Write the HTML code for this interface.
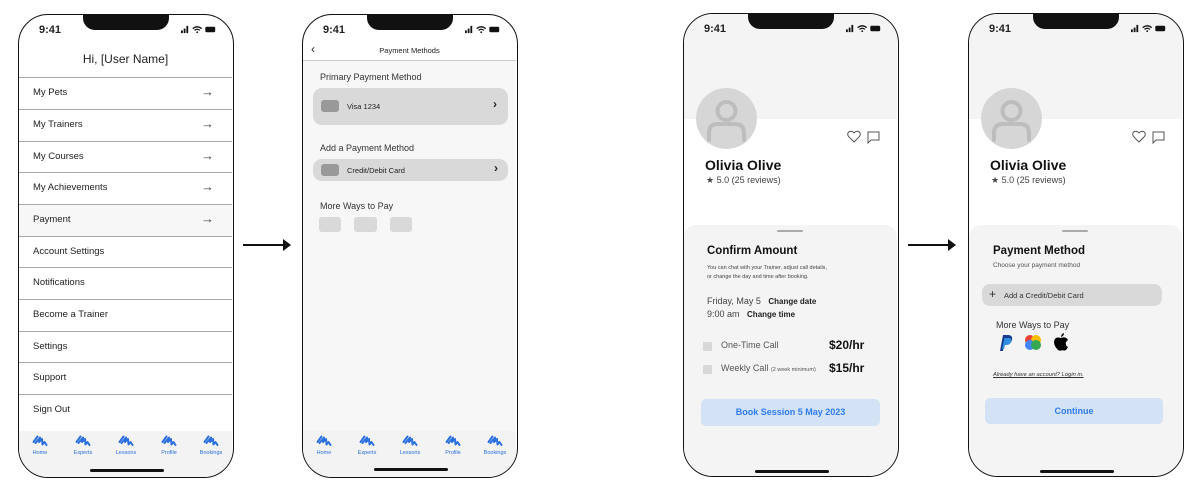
<!DOCTYPE html>
<html><head><meta charset="utf-8"><style>
*{margin:0;padding:0;box-sizing:border-box}
body{width:1200px;height:494px;background:#fff;position:relative;overflow:hidden;font-family:"Liberation Sans",sans-serif;color:#222}
.ph{position:absolute;width:216px;height:464px;border:1.5px solid #111;border-radius:30px;overflow:hidden;background:#fff}
.notch{position:absolute;left:64px;top:-2px;width:86px;height:17px;background:#111;border-radius:0 0 12px 12px;z-index:5}
.time{position:absolute;left:20px;top:9px;font-size:11px;font-weight:bold;z-index:5}
.st{position:absolute;right:16px;top:10px;z-index:5;display:flex;gap:4px;align-items:center}
.a{position:absolute;white-space:nowrap}
.hi{position:absolute;left:71px;bottom:5px;width:74px;height:3px;background:#111;border-radius:2px;z-index:5}
.row{position:absolute;left:0;width:213px;height:32px;border-top:1px solid #aaa;font-size:9.5px;padding:9px 0 0 14px}
.row i{position:absolute;right:18px;top:6px;font-style:normal;font-size:13px;color:#444}
.tab{position:absolute;left:0;top:416px;width:213px;height:46px;background:#f3f3f3}
.ti{position:absolute;top:4px;width:40px;text-align:center;font-size:5.5px;color:#2b6fe0}
.ti svg{display:block;margin:0 auto 3px}
.sheet{position:absolute;left:0;top:211px;width:213px;height:260px;background:#f4f4f4;border-radius:12px 12px 0 0}
.handle{position:absolute;left:93px;top:5px;width:26px;height:2px;background:#aaa;border-radius:1px}
</style></head><body>

<svg width="0" height="0" style="position:absolute"><defs>
<symbol id="sq" viewBox="0 0 16 12"><path d="M1.5 7 L5.5 1.5 M3.5 8 L8 2.5 L7 7 L10 4 L10.5 9.5 L12.5 7 L14.5 10" fill="none" stroke="#2b6fe0" stroke-width="2" stroke-linecap="round" stroke-linejoin="round"/></symbol>
<symbol id="stat" viewBox="0 0 40 10"><rect x="0" y="6" width="2" height="3" fill="#111"/><rect x="3" y="4" width="2" height="5" fill="#111"/><rect x="6" y="1" width="2" height="8" fill="#111"/><path d="M13 4 Q18 0 23 4 M15 6 Q18 3.5 21 6" stroke="#111" stroke-width="1.4" fill="none"/><circle cx="18" cy="8" r="1" fill="#111"/><rect x="27" y="2" width="11" height="6" rx="1.5" fill="#111"/></symbol>
</defs></svg>

<!-- Phone 1 -->
<div class="ph" style="left:18px;top:14px">
<div class="notch"></div><div class="time">9:41</div><div class="st"><svg width="36" height="9"><use href="#stat"/></svg></div>
<div class="a" style="left:0;width:213px;text-align:center;top:37px;font-size:12px">Hi, [User Name]</div>
<div class="row" style="top:62px">My Pets<i>→</i></div>
<div class="row" style="top:94px">My Trainers<i>→</i></div>
<div class="row" style="top:126px">My Courses<i>→</i></div>
<div class="row" style="top:157px">My Achievements<i>→</i></div>
<div class="row" style="top:189px;background:#f7f7f7">Payment<i>→</i></div>
<div class="row" style="top:221px">Account Settings</div>
<div class="row" style="top:252px">Notifications</div>
<div class="row" style="top:284px">Become a Trainer</div>
<div class="row" style="top:316px">Settings</div>
<div class="row" style="top:347px">Support</div>
<div class="row" style="top:379px">Sign Out</div>
<div class="tab">
<div class="ti" style="left:1px"><svg width="16" height="12"><use href="#sq"/></svg>Home</div>
<div class="ti" style="left:44px"><svg width="16" height="12"><use href="#sq"/></svg>Experts</div>
<div class="ti" style="left:87px"><svg width="16" height="12"><use href="#sq"/></svg>Lessons</div>
<div class="ti" style="left:130px"><svg width="16" height="12"><use href="#sq"/></svg>Profile</div>
<div class="ti" style="left:172px"><svg width="16" height="12"><use href="#sq"/></svg>Bookings</div>
</div>
<div class="hi"></div>
</div>

<svg class="a" style="left:243px;top:238px" width="50" height="14"><line x1="0" y1="7" x2="45" y2="7" stroke="#111" stroke-width="2"/><path d="M40 1 L48 7 L40 13 Z" fill="#111"/></svg>

<!-- Phone 2 -->
<div class="ph" style="left:302px;top:14px">
<div class="notch"></div><div class="time">9:41</div><div class="st"><svg width="36" height="9"><use href="#stat"/></svg></div>
<div class="a" style="left:8px;top:27px;font-size:12px">‹</div>
<div class="a" style="left:0;width:213px;text-align:center;top:31px;font-size:7.5px">Payment Methods</div>
<div class="a" style="left:0;top:45px;width:213px;height:371px;background:#f7f7f7;border-top:1px solid #ccc"></div>
<div class="a" style="left:17px;top:57px;font-size:9px;color:#333">Primary Payment Method</div>
<div class="a" style="left:10px;top:73px;width:195px;height:37px;background:#d9d9d9;border-radius:9px"></div>
<div class="a" style="left:18px;top:85px;width:18px;height:12px;background:#999;border-radius:3px"></div>
<div class="a" style="left:44px;top:87px;font-size:7.5px">Visa 1234</div>
<div class="a" style="left:190px;top:82px;font-size:12px;font-weight:bold">›</div>
<div class="a" style="left:17px;top:128px;font-size:9px;color:#333">Add a Payment Method</div>
<div class="a" style="left:10px;top:144px;width:195px;height:22px;background:#d9d9d9;border-radius:9px"></div>
<div class="a" style="left:18px;top:149px;width:18px;height:12px;background:#999;border-radius:3px"></div>
<div class="a" style="left:44px;top:151px;font-size:7.5px">Credit/Debit Card</div>
<div class="a" style="left:191px;top:146px;font-size:12px;font-weight:bold">›</div>
<div class="a" style="left:17px;top:186px;font-size:9px;color:#333">More Ways to Pay</div>
<div class="a" style="left:16px;top:202px;width:22px;height:15px;background:#d9d9d9;border-radius:3px"></div>
<div class="a" style="left:51px;top:202px;width:23px;height:15px;background:#d9d9d9;border-radius:3px"></div>
<div class="a" style="left:87px;top:202px;width:22px;height:15px;background:#d9d9d9;border-radius:3px"></div>
<div class="tab">
<div class="ti" style="left:1px"><svg width="16" height="12"><use href="#sq"/></svg>Home</div>
<div class="ti" style="left:44px"><svg width="16" height="12"><use href="#sq"/></svg>Experts</div>
<div class="ti" style="left:87px"><svg width="16" height="12"><use href="#sq"/></svg>Lessons</div>
<div class="ti" style="left:130px"><svg width="16" height="12"><use href="#sq"/></svg>Profile</div>
<div class="ti" style="left:172px"><svg width="16" height="12"><use href="#sq"/></svg>Bookings</div>
</div>
<div class="hi" style="top:453px;bottom:auto"></div>
</div>

<!-- Phone 3 -->
<div class="ph" style="left:683px;top:13px">
<div class="a" style="left:0;top:0;width:213px;height:105px;background:#f4f4f4"></div>
<div class="notch"></div><div class="time">9:41</div><div class="st"><svg width="36" height="9"><use href="#stat"/></svg></div>
<div class="a" style="left:12px;top:74px;width:61px;height:61px;border-radius:50%;background:#d6d6d6;overflow:hidden"><svg width="61" height="61"><circle cx="30.5" cy="23" r="9" fill="none" stroke="#bdbdbd" stroke-width="4"/><path d="M13 52 V45 Q13 36 22 36 H39 Q48 36 48 45 V52" fill="none" stroke="#bdbdbd" stroke-width="4" stroke-linecap="round"/></svg></div>
<svg class="a" style="left:163px;top:116px" width="14" height="13"><path d="M7 12 L1.5 6.5 Q-0.5 3 2.5 1.5 Q5 0.5 7 3 Q9 0.5 11.5 1.5 Q14.5 3 12.5 6.5 Z" fill="none" stroke="#555" stroke-width="1"/></svg>
<svg class="a" style="left:183px;top:117px" width="13" height="13"><path d="M1 1 H12 V9 H4 L1 12 Z" fill="none" stroke="#555" stroke-width="1"/></svg>
<div class="a" style="left:21px;top:143px;font-size:14px;font-weight:bold;color:#111">Olivia Olive</div>
<div class="a" style="left:22px;top:161px;font-size:9px;color:#444">★ 5.0 (25 reviews)</div>
<div class="sheet"><div class="handle"></div>
<div class="a" style="left:23px;top:20px;font-size:11.5px;font-weight:bold;color:#111">Confirm Amount</div>
<div class="a" style="left:23px;top:39px;font-size:5.5px;color:#444;line-height:9px">You can chat with your Trainer, adjust call details,<br>or change the day and time after booking.</div>
<div class="a" style="left:23px;top:71px;font-size:9px;color:#444">Friday, May 5 &nbsp;&nbsp;<b style="font-size:8px;color:#222">Change date</b></div>
<div class="a" style="left:23px;top:84px;font-size:9px;color:#444">9:00 am &nbsp;&nbsp;<b style="font-size:8px;color:#222">Change time</b></div>
<div class="a" style="left:19px;top:117px;width:9px;height:9px;background:#d8d8d8"></div>
<div class="a" style="left:37px;top:115px;font-size:9px;color:#555">One-Time Call</div>
<div class="a" style="left:145px;top:113px;font-size:12px;font-weight:bold;color:#111">$20/hr</div>
<div class="a" style="left:19px;top:140px;width:9px;height:9px;background:#d8d8d8"></div>
<div class="a" style="left:37px;top:138px;font-size:9px;color:#555">Weekly Call <span style="font-size:5.5px">(2 week minimum)</span></div>
<div class="a" style="left:145px;top:136px;font-size:12px;font-weight:bold;color:#111">$15/hr</div>
<div class="a" style="left:17px;top:174px;width:179px;height:27px;background:#d3e2f5;border-radius:5px;text-align:center;font-size:9px;font-weight:bold;color:#2f7bf0;padding-top:8px">Book Session 5 May 2023</div>
</div>
<div class="hi" style="bottom:3px"></div>
</div>

<svg class="a" style="left:908px;top:238px" width="50" height="14"><line x1="0" y1="7" x2="45" y2="7" stroke="#111" stroke-width="2"/><path d="M40 1 L48 7 L40 13 Z" fill="#111"/></svg>

<!-- Phone 4 -->
<div class="ph" style="left:968px;top:13px">
<div class="a" style="left:0;top:0;width:213px;height:105px;background:#f4f4f4"></div>
<div class="notch"></div><div class="time">9:41</div><div class="st"><svg width="36" height="9"><use href="#stat"/></svg></div>
<div class="a" style="left:12px;top:74px;width:61px;height:61px;border-radius:50%;background:#d6d6d6;overflow:hidden"><svg width="61" height="61"><circle cx="30.5" cy="23" r="9" fill="none" stroke="#bdbdbd" stroke-width="4"/><path d="M13 52 V45 Q13 36 22 36 H39 Q48 36 48 45 V52" fill="none" stroke="#bdbdbd" stroke-width="4" stroke-linecap="round"/></svg></div>
<svg class="a" style="left:163px;top:116px" width="14" height="13"><path d="M7 12 L1.5 6.5 Q-0.5 3 2.5 1.5 Q5 0.5 7 3 Q9 0.5 11.5 1.5 Q14.5 3 12.5 6.5 Z" fill="none" stroke="#555" stroke-width="1"/></svg>
<svg class="a" style="left:183px;top:117px" width="13" height="13"><path d="M1 1 H12 V9 H4 L1 12 Z" fill="none" stroke="#555" stroke-width="1"/></svg>
<div class="a" style="left:21px;top:143px;font-size:14px;font-weight:bold;color:#111">Olivia Olive</div>
<div class="a" style="left:22px;top:161px;font-size:9px;color:#444">★ 5.0 (25 reviews)</div>
<div class="sheet"><div class="handle"></div>
<div class="a" style="left:24px;top:20px;font-size:11.5px;font-weight:bold;color:#111">Payment Method</div>
<div class="a" style="left:24px;top:37px;font-size:6.5px;color:#555">Choose your payment method</div>
<div class="a" style="left:13px;top:59px;width:180px;height:22px;background:#d9d9d9;border-radius:8px"></div>
<div class="a" style="left:20px;top:62px;font-size:12px;color:#333">+</div>
<div class="a" style="left:35px;top:66px;font-size:7.5px;color:#333">Add a Credit/Debit Card</div>
<div class="a" style="left:27px;top:95px;font-size:9px;color:#333">More Ways to Pay</div>
<svg class="a" style="left:28px;top:109px" width="16" height="18"><path d="M3 17 L6 1 H11 Q16 1 15 6 Q14 10 9 10 H7 L6 17 Z" fill="#1a3a8c"/><path d="M5 15 L7.5 4 H12 Q15 4 14 8 Q13 11 9 11 H8 L7 15 Z" fill="#2f8fe0"/></svg>
<svg class="a" style="left:55px;top:109px" width="18" height="17"><circle cx="6" cy="6" r="5" fill="#ea4335"/><circle cx="12" cy="6" r="5" fill="#fbbc04"/><circle cx="6" cy="11" r="5" fill="#4285f4"/><circle cx="12" cy="11" r="5" fill="#34a853"/></svg>
<svg class="a" style="left:84px;top:108px" width="16" height="18"><path d="M8 5 Q10 4 12 4.5 Q14 5 15 7 Q12 9 13 12 Q14 14 15 14 Q13 18 11 17.5 Q9.5 17 8 17.5 Q6.5 18 5 17 Q1 13 1 9 Q1.5 4.5 5 4.5 Q6.5 4.5 8 5 Z M8 4 Q8 1 11 0 Q11 3 8 4 Z" fill="#000"/></svg>
<div class="a" style="left:24px;top:147px;font-size:5.8px;font-style:italic;text-decoration:underline;color:#333">Already have an account? Login in.</div>
<div class="a" style="left:16px;top:173px;width:178px;height:26px;background:#d3e2f5;border-radius:5px;text-align:center;font-size:9px;font-weight:bold;color:#2f7bf0;padding-top:8px">Continue</div>
</div>
<div class="hi" style="bottom:3px"></div>
</div>

</body></html>
